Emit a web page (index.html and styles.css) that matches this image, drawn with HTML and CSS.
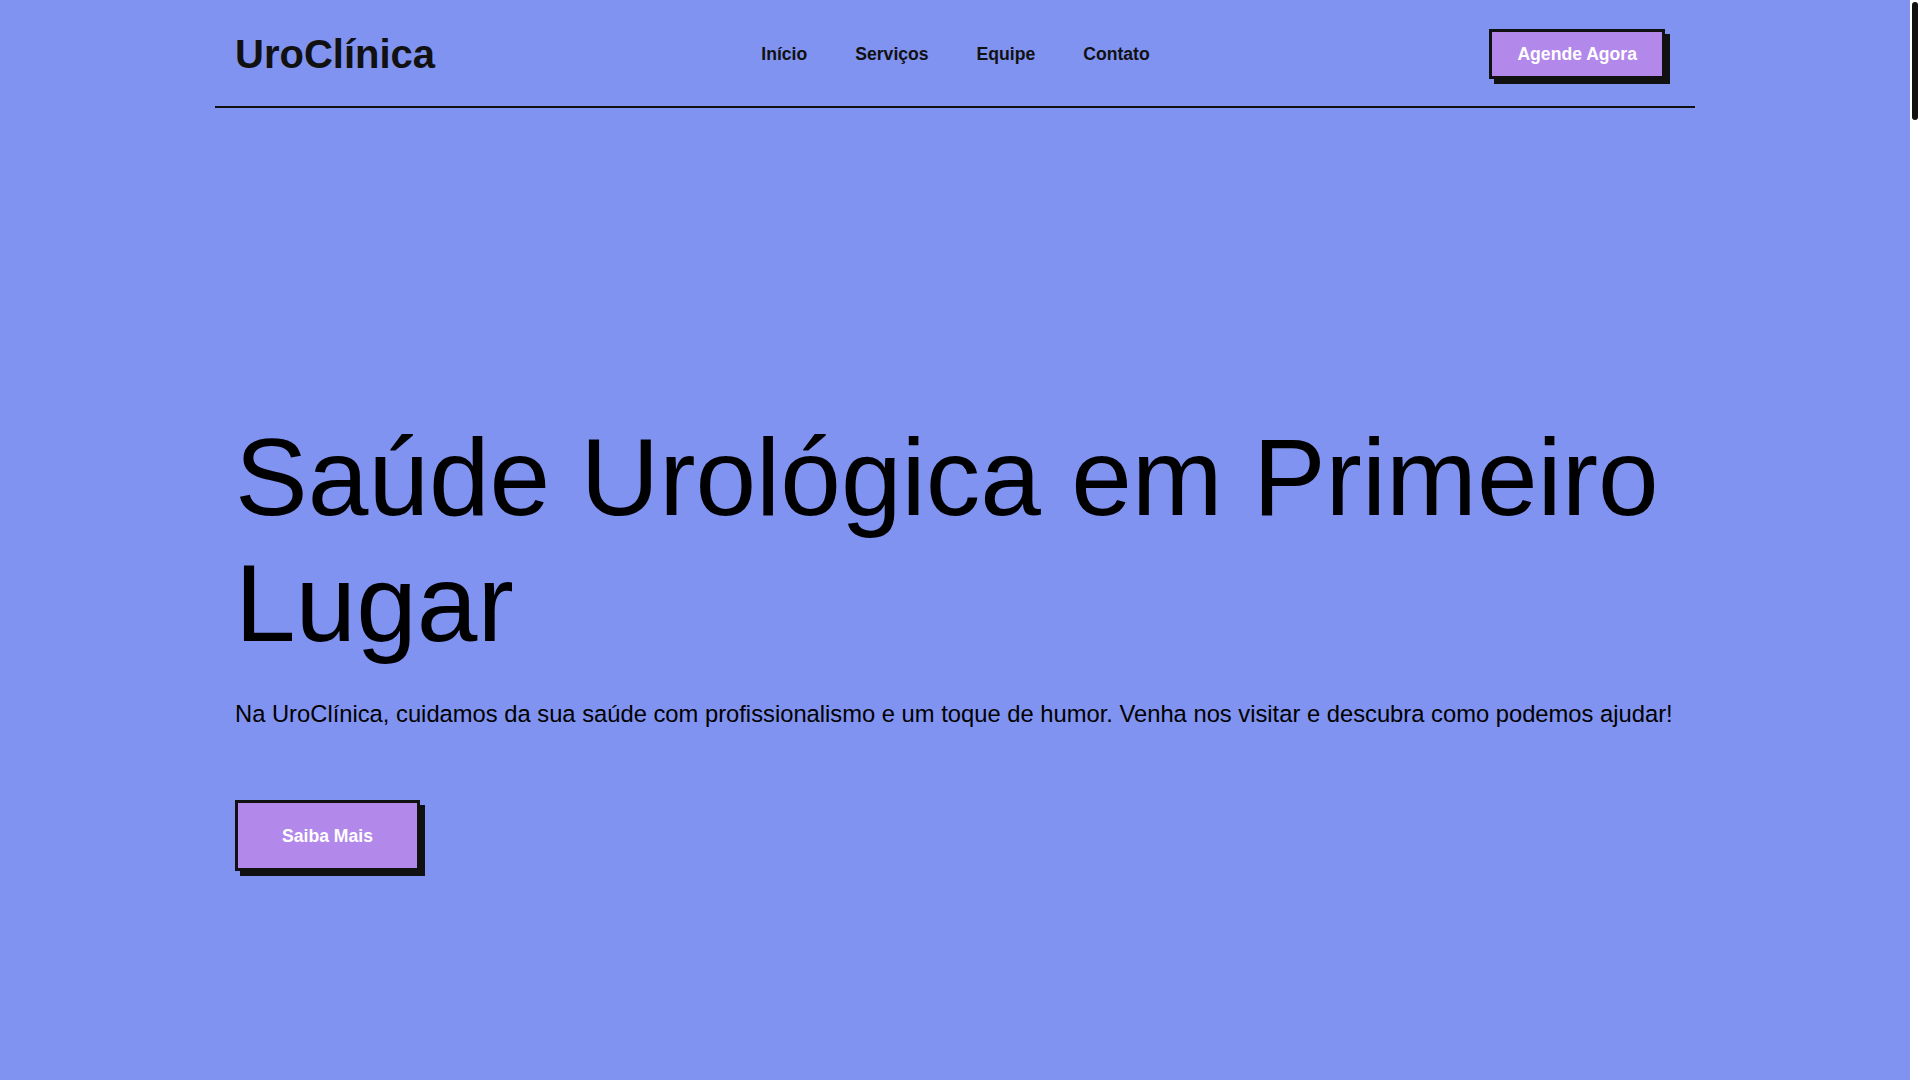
FILE: index.html
```html
<!DOCTYPE html>
<html lang="pt-BR">
<head>
<meta charset="utf-8">
<title>UroClínica</title>
<link rel="stylesheet" href="styles.css">
</head>
<body>
<div class="page">
  <div class="container">
    <header class="site-header">
      <div class="logo">UroClínica</div>
      <nav class="nav">
        <a href="#inicio">Início</a>
        <a href="#servicos">Serviços</a>
        <a href="#equipe">Equipe</a>
        <a href="#contato">Contato</a>
      </nav>
      <div class="header-cta">
        <a class="btn btn-small" href="#contato">Agende Agora</a>
      </div>
    </header>

    <section class="hero" id="inicio">
      <h1 class="hero-title">Saúde Urológica em Primeiro Lugar</h1>
      <p class="hero-text">Na UroClínica, cuidamos da sua saúde com profissionalismo e um toque de humor. Venha nos visitar e descubra como podemos ajudar!</p>
      <a class="btn btn-large" href="#servicos">Saiba Mais</a>
    </section>
  </div>
</div>
<div class="scrollbar" aria-hidden="true">
  <div class="scrollbar-thumb"></div>
</div>
</body>
</html>
```

FILE: styles.css
```css
html,
body {
  height: 100%;
}

body {
  margin: 0;
  display: flex;
  overflow: hidden;
  background: #8093f1;
  color: #000000;
  font-family: "Liberation Sans", Arial, sans-serif;
}

.page {
  flex: 1;
  min-width: 0;
}

.scrollbar {
  width: 10px;
  flex: none;
  background: #ffffff;
  display: flex;
  justify-content: center;
  padding-top: 2px;
  box-sizing: border-box;
}

.scrollbar-thumb {
  width: 6px;
  height: 118px;
  background: #111111;
  border-radius: 3px;
}

.container {
  max-width: 1480px;
  margin: 0 auto;
}

.site-header {
  display: grid;
  grid-template-columns: 1fr auto 1fr;
  align-items: center;
  padding: 29px 20px 27px;
  border-bottom: 2px solid #111111;
}

.logo {
  font-size: 40px;
  font-weight: 700;
  line-height: 1.15;
  color: #111111;
}

.nav {
  display: flex;
  gap: 48px;
  margin-left: 1px;
}

.nav a {
  color: #111111;
  text-decoration: none;
  font-weight: 700;
  font-size: 17.6px;
}

.header-cta {
  display: flex;
  justify-content: flex-end;
  padding-right: 10px;
}

.btn {
  display: inline-block;
  background: #b388eb;
  color: #ffffff;
  font-weight: 700;
  font-size: 17.6px;
  line-height: 1.15;
  text-decoration: none;
  border: 3px solid #111111;
  box-shadow: 5px 5px 0 #111111;
}

.btn-small {
  padding: 12px 25px;
}

.btn-large {
  padding: 22.5px 44px;
}

.hero {
  padding: 307px 20px 0;
}

.hero-title {
  margin: 0;
  font-size: 109px;
  font-weight: 400;
  line-height: 1.15;
}

.hero-text {
  margin: 34px 0 0;
  font-size: 23.75px;
  line-height: 1.15;
}

.hero .btn-large {
  margin-top: 73px;
}
```
